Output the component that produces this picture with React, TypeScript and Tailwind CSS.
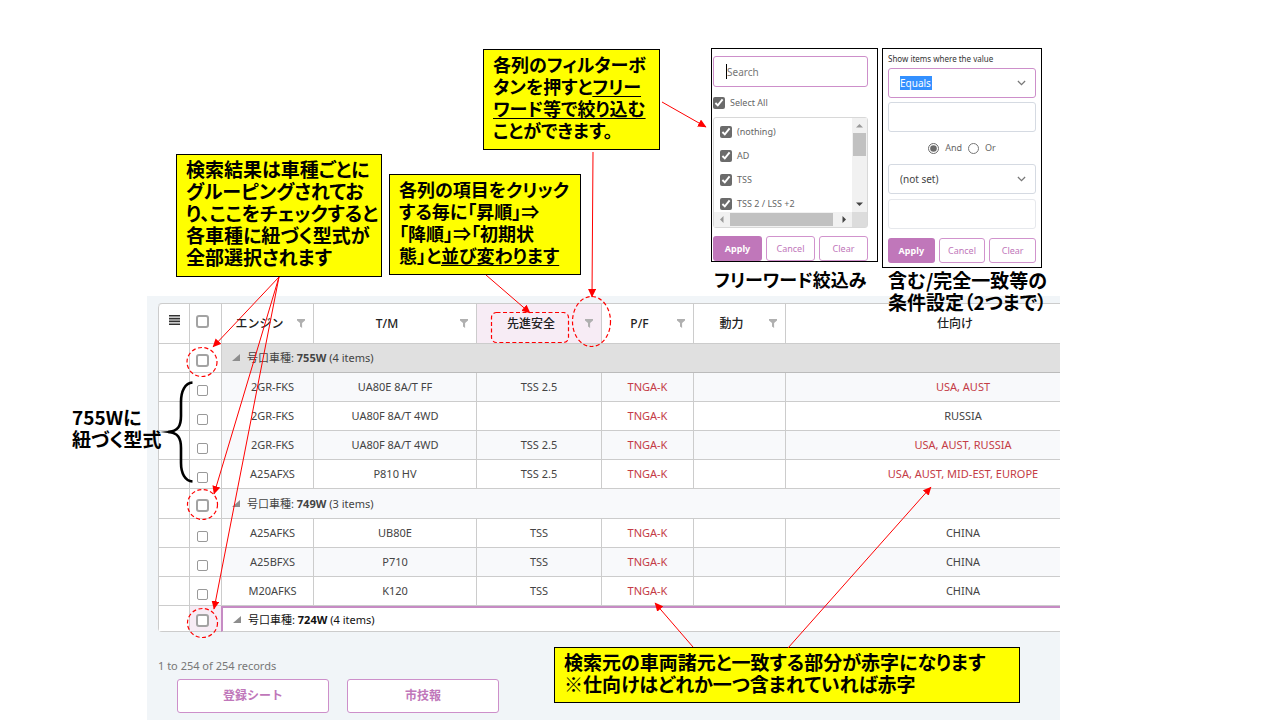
import type { ReactNode } from "react";

type Row = { engine: string; tm: string; safety: string; pf: string; dest: string; match: boolean };
type Group = { name: string; count: number; rows: Row[] };

const groups: Group[] = [
  {
    name: "755W",
    count: 4,
    rows: [
      { engine: "2GR-FKS", tm: "UA80E 8A/T FF", safety: "TSS 2.5", pf: "TNGA-K", dest: "USA, AUST", match: true },
      { engine: "2GR-FKS", tm: "UA80F 8A/T 4WD", safety: "", pf: "TNGA-K", dest: "RUSSIA", match: false },
      { engine: "2GR-FKS", tm: "UA80F 8A/T 4WD", safety: "TSS 2.5", pf: "TNGA-K", dest: "USA, AUST, RUSSIA", match: true },
      { engine: "A25AFXS", tm: "P810 HV", safety: "TSS 2.5", pf: "TNGA-K", dest: "USA, AUST, MID-EST, EUROPE", match: true },
    ],
  },
  {
    name: "749W",
    count: 3,
    rows: [
      { engine: "A25AFKS", tm: "UB80E", safety: "TSS", pf: "TNGA-K", dest: "CHINA", match: false },
      { engine: "A25BFXS", tm: "P710", safety: "TSS", pf: "TNGA-K", dest: "CHINA", match: false },
      { engine: "M20AFKS", tm: "K120", safety: "TSS", pf: "TNGA-K", dest: "CHINA", match: false },
    ],
  },
  { name: "724W", count: 4, rows: [] },
];

const groupStyles = [
  { row: "h-[29px]", cell: "bg-[#e0e0e0] border-b-[#bbb] text-[#444]", check: "" },
  { row: "h-[30px]", cell: "bg-[#f8f9fb] text-[#444]", check: "" },
  {
    row: "h-[26px]",
    cell: "bg-white text-[#111] border-t-2 border-t-[#c68bc4] border-l-2 border-l-[#c68bc4]",
    check: "bg-[#f7ecf5]",
  },
];

const columns = [
  { label: "エンジン", filter: true },
  { label: "T/M", filter: true },
  { label: "先進安全", filter: true },
  { label: "P/F", filter: true },
  { label: "動力", filter: true },
  { label: "仕向け", filter: false },
];

function Funnel() {
  return (
    <svg viewBox="0 0 8 9" className="h-[9px] w-2" fill="#b0b0b0" aria-hidden="true">
      <path d="M0 0h8v1.4L5.1 4V9L3 7.400V4L0 1.4z" />
    </svg>
  );
}

function Tick({ label, large }: { label: string; large?: boolean }) {
  return (
    <input
      type="checkbox"
      aria-label={label}
      className={
        large
          ? "block size-[13px] appearance-none rounded-[3px] border-2 border-[#a3a3a3] bg-white"
          : "block size-[11px] appearance-none rounded-[2px] border border-[#999] bg-white"
      }
    />
  );
}

const cell = "border-b border-l border-[#ccc] p-0";

function ResultTable() {
  return (
    <div className="overflow-hidden rounded-l-[4px] border-t border-[#ccc] bg-white">
      <table className="w-full table-fixed border-separate border-spacing-0 text-center text-[12px] leading-4 text-[#444]">
        <colgroup>
          <col className="w-[31px]" />
          <col className="w-[32px]" />
          <col className="w-[92px]" />
          <col className="w-[163px]" />
          <col className="w-[125px]" />
          <col className="w-[92px]" />
          <col className="w-[92px]" />
          <col />
        </colgroup>
        <thead>
          <tr className="h-[40px]">
            <th className={`${cell} rounded-tl-[4px]`}>
              <button type="button" aria-label="メニュー" className="mx-auto mb-2 block">
                <svg viewBox="0 0 11 10" className="h-[10px] w-[11px]" fill="#333" aria-hidden="true">
                  <path d="M0 0h11v1.6H0zM0 2.8h11v1.6H0zM0 5.6h11v1.6H0zM0 8.4h11V10H0z" />
                </svg>
              </button>
            </th>
            <th className={cell}>
              <div className="flex pb-1 pl-[6px]">
                <Tick label="すべて選択" large />
              </div>
            </th>
            {columns.map((c) => (
              <th
                key={c.label}
                className={`${cell} font-medium text-[#222] ${c.label === "先進安全" ? "bg-[#f7ecf5]" : ""}`}
              >
                <div className={`flex items-center ${c.filter ? "pr-2" : "pl-16"}`}>
                  <span className="flex-1">{c.label}</span>
                  {c.filter && (
                    <button type="button" aria-label={`${c.label}のフィルター`}>
                      <Funnel />
                    </button>
                  )}
                </div>
              </th>
            ))}
          </tr>
        </thead>
        {groups.map((g, gi) => (
          <tbody key={g.name} className="text-[11px]">
            <tr className={groupStyles[gi].row}>
              <td className={cell} />
              <td className={`${cell} ${groupStyles[gi].check}`}>
                <div className="flex pt-1 pl-[6px]">
                  <Tick label={`${g.name}を選択`} large />
                </div>
              </td>
              <td colSpan={6} className={`${cell} text-left ${groupStyles[gi].cell}`}>
                <div className="flex items-center pl-[10px]">
                  <svg viewBox="0 0 8 8" className="mr-[7px] size-2" fill="#8d8d8d" aria-hidden="true">
                    <path d="M8 0v7H0z" />
                  </svg>
                  <span>
                    号口車種: <b>{g.name}</b> ({g.count} items)
                  </span>
                </div>
              </td>
            </tr>
            {g.rows.map((r, i) => {
              const shade = (i + gi) % 2 === 0 ? "bg-[#f8f9fb]" : "bg-white";
              return (
                <tr key={i} className="h-[29px]">
                  <td className={cell} />
                  <td className={cell}>
                    <div className="flex pt-[6px] pl-[7px]">
                      <Tick label={`${r.engine}を選択`} />
                    </div>
                  </td>
                  <td className={`${cell} ${shade} pl-[10px]`}>{r.engine}</td>
                  <td className={`${cell} ${shade}`}>{r.tm}</td>
                  <td className={`${cell} ${shade}`}>{r.safety}</td>
                  <td className={`${cell} ${shade} text-[#c43c46]`}>{r.pf}</td>
                  <td className={`${cell} ${shade}`} />
                  <td className={`${cell} ${shade} pl-20 ${r.match ? "text-[#c43c46]" : ""}`}>{r.dest}</td>
                </tr>
              );
            })}
          </tbody>
        ))}
      </table>
    </div>
  );
}

const noteFont =
  "font-['Noto_Sans_CJK_JP',sans-serif] font-bold leading-[22px] text-black whitespace-nowrap [font-feature-settings:'palt']";

function Note({ place, children }: { place: string; children: ReactNode }) {
  return (
    <p className={`absolute border border-black bg-[#ffff00] pl-[9px] pt-[3px] ${noteFont} ${place}`}>{children}</p>
  );
}

function PanelButtons() {
  const outline = "rounded-[3px] border border-[#d193cd] bg-white text-[#c077ba]";
  return (
    <div className="grid h-[25px] grid-cols-3 gap-1 text-[9px]">
      <button type="button" className="rounded-[3px] bg-[#c077ba] font-bold text-white">
        Apply
      </button>
      <button type="button" className={outline}>
        Cancel
      </button>
      <button type="button" className={outline}>
        Clear
      </button>
    </div>
  );
}

function Arrow({ dir }: { dir: "up" | "down" | "left" | "right" }) {
  const d = {
    up: "M0 5.5L3.5 2 7 5.5z",
    down: "M0 1.5L3.5 5 7 1.5z",
    left: "M5.5 0L2 3.5 5.5 7z",
    right: "M1.5 0L5 3.5 1.5 7z",
  }[dir];
  return (
    <svg viewBox="0 0 7 7" className="size-[7px]" fill={dir === "up" || dir === "left" ? "#999" : "#444"} aria-hidden="true">
      <path d={d} />
    </svg>
  );
}

function SearchPanel() {
  return (
    <form className="absolute top-[48px] left-[711px] w-[167px] border border-black bg-white pt-[7px] pr-[9px] pl-px text-[10px] leading-4 text-[#666]">
      <div className="flex h-[31px] items-center rounded-[3px] border border-[#cd8fca] pl-3">
        <span className="h-[15px] w-px bg-black" />
        <input
          type="text"
          placeholder="Search"
          aria-label="Search"
          className="w-full min-w-0 text-[10px] outline-none placeholder:text-[#777]"
        />
      </div>
      <label className="mt-2 flex items-center gap-[5px] text-[9px]">
        <input type="checkbox" defaultChecked className="size-3 accent-[#6b6b6b]" />
        Select All
      </label>
      <div className="mt-[6px] rounded-[3px] border border-[#d8d8d8]">
        <div className="flex h-[94px] overflow-hidden">
          <div className="flex flex-1 flex-col gap-2 pt-[6px] pl-[6px]">
            {["(nothing)", "AD", "TSS", "TSS 2 / LSS +2"].map((t) => (
              <label key={t} className="flex items-center gap-[5px] text-[9px] whitespace-nowrap">
                <input type="checkbox" defaultChecked className="size-3 accent-[#6b6b6b]" />
                {t}
              </label>
            ))}
          </div>
          <div className="flex w-[15px] flex-col items-center bg-[#f1f1f1] py-1">
            <Arrow dir="up" />
            <span className="mt-1 h-[23px] w-[13px] bg-[#c1c1c1]" />
            <span className="flex-1" />
            <Arrow dir="down" />
          </div>
        </div>
        <div className="flex h-[15px]">
          <div className="flex flex-1 items-center bg-[#f1f1f1] px-1">
            <Arrow dir="left" />
            <span className="mr-2 ml-[5px] h-[13px] w-[103px] bg-[#c1c1c1]" />
            <Arrow dir="right" />
          </div>
          <span className="w-[15px] bg-[#dcdcdc]" />
        </div>
      </div>
      <div className="mt-2">
        <PanelButtons />
      </div>
    </form>
  );
}

function Chevron() {
  return (
    <svg
      viewBox="0 0 10 6"
      className="pointer-events-none absolute top-3 right-[10px] h-[6px] w-[9px]"
      fill="none"
      stroke="#777"
      strokeWidth="1.4"
      aria-hidden="true"
    >
      <path d="M1 .8l4 4 4-4" />
    </svg>
  );
}

function ConditionPanel() {
  return (
    <form className="absolute top-[48px] left-[882px] w-[160px] border border-black bg-white px-[5px] pt-[2px] pb-1 text-[9px] text-[#444]">
      <label htmlFor="op1" className="block text-[8px] leading-4 text-[#333]">
        Show items where the value
      </label>
      <div className="relative mt-px">
        <select
          id="op1"
          className="block h-[30px] w-full appearance-none rounded-[3px] border border-[#cd8fca] bg-[linear-gradient(#3390ff,#3390ff)] bg-[length:32px_14px] bg-[position:11px_7px] bg-no-repeat pl-[11px] text-[10px] text-white"
        >
          <option>Equals</option>
        </select>
        <Chevron />
      </div>
      <input type="text" aria-label="値1" className="mt-1 block h-[30px] w-full rounded-[3px] border border-[#d5dae2]" />
      <div className="flex h-8 items-center justify-center gap-[6px] text-[#666]">
        <label className="flex items-center gap-[6px]">
          <input type="radio" name="join" defaultChecked className="size-[11px] accent-[#6b6b6b]" />
          And
        </label>
        <label className="flex items-center gap-[6px]">
          <input type="radio" name="join" className="size-[11px] accent-[#6b6b6b]" />
          Or
        </label>
      </div>
      <div className="relative">
        <select
          aria-label="条件2"
          className="block h-[30px] w-full appearance-none rounded-[3px] border border-[#d5dae2] bg-white pl-[11px] text-[10px] text-[#444]"
        >
          <option>(not set)</option>
        </select>
        <Chevron />
      </div>
      <input type="text" aria-label="値2" className="mt-[5px] mb-[9px] block h-[30px] w-full rounded-[3px] border border-[#e6e8ec]" />
      <PanelButtons />
    </form>
  );
}

const arrows = [
  [279, 277, 213, 347],
  [279, 277, 214, 494],
  [279, 277, 214, 609],
  [486, 275, 530, 313],
  [593, 152, 592, 297],
  [662, 102, 706, 127],
  [693, 647, 655, 603],
  [788, 648, 931, 487],
];

function Marks() {
  return (
    <svg
      viewBox="0 0 1280 720"
      className="pointer-events-none absolute top-0 left-0 h-[720px] w-[1280px] max-w-none"
      fill="none"
      stroke="#ff0000"
      aria-hidden="true"
    >
      <defs>
        <marker id="head" markerUnits="userSpaceOnUse" markerWidth="9" markerHeight="8" refX="8" refY="4" orient="auto">
          <path d="M0 0L8.500 4L0 8z" fill="#ff0000" stroke="none" />
        </marker>
      </defs>
      {arrows.map(([x1, y1, x2, y2], i) => (
        <line key={i} x1={x1} y1={y1} x2={x2} y2={y2} markerEnd="url(#head)" />
      ))}
      <g strokeDasharray="4 2.5" strokeWidth="1.2">
        <ellipse cx="202" cy="362" rx="15" ry="14.500" />
        <ellipse cx="202.500" cy="504.500" rx="15" ry="15" />
        <ellipse cx="202.500" cy="623" rx="15" ry="14.500" />
        <ellipse cx="591.500" cy="321.500" rx="19" ry="25" />
        <rect x="491.500" y="312.500" width="77" height="30" rx="5" />
      </g>
      <path
        d="M192.500 382.500C185 383 181 391 181 402V416C181 426 178 431.500 168 432C178 432.500 181 438 181 448V463C181 473 185 481 192.500 481.500"
        stroke="#000"
        strokeWidth="2.6"
      />
      <path d="M160 432L172 430.600V433.400z" fill="#000" stroke="none" />
    </svg>
  );
}

export default function App() {
  const action =
    "h-[34px] w-[152px] rounded-[3px] border border-[#cd8fca] bg-white text-[12px] font-bold text-[#c077ba]";
  return (
    <main className="relative min-h-screen bg-white pt-[296px] pr-[220px] pl-[147px] font-['Noto_Sans','Noto_Sans_CJK_JP',sans-serif]">
      <section className="min-h-[424px] bg-[#f1f5f8] pt-[7px] pl-[11px]">
        <ResultTable />
        <p className="mt-[26px] text-[11px] leading-4 text-[#777]">1 to 254 of 254 records</p>
        <div className="mt-[5px] flex gap-[18px] pl-[19px]">
          <button type="button" className={action}>
            登録シート
          </button>
          <button type="button" className={action}>
            市技報
          </button>
        </div>
      </section>

      <SearchPanel />
      <ConditionPanel />

      <p className={`absolute top-[268px] left-[714px] text-[18px] ${noteFont}`}>フリーワード絞込み</p>
      <p className={`absolute top-[269px] left-[888px] text-[19px] ${noteFont}`}>
        含む/完全一致等の
        <br />
        条件設定（2つまで）
      </p>
      <p className={`absolute top-[406px] left-[72px] text-[19px] ${noteFont}`}>
        755Wに
        <br />
        紐づく型式
      </p>

      <Note place="top-[154px] left-[176px] h-[123px] w-[206px] text-[19px]">
        検索結果は車種ごとに
        <br />
        グルーピングされてお
        <br />
        り、ここをチェックすると
        <br />
        各車種に紐づく型式が
        <br />
        全部選択されます
      </Note>
      <Note place="top-[174px] left-[389px] h-[101px] w-[192px] text-[18px]">
        各列の項目をクリック
        <br />
        する毎に「昇順」⇒
        <br />
        「降順」⇒「初期状
        <br />
        態」と<u className="underline-offset-2">並び変わります</u>
      </Note>
      <Note place="top-[49px] left-[483px] h-[101px] w-[177px] text-[18px]">
        各列のフィルターボ
        <br />
        タンを押すと
        <u className="underline-offset-2">
          フリー
          <br />
          ワード等で絞り込む
        </u>
        <br />
        ことができます。
      </Note>
      <Note place="top-[647px] left-[554px] h-[56px] w-[466px] text-[19px]">
        検索元の車両諸元と一致する部分が赤字になります
        <br />
        ※仕向けはどれか一つ含まれていれば赤字
      </Note>

      <Marks />
    </main>
  );
}
